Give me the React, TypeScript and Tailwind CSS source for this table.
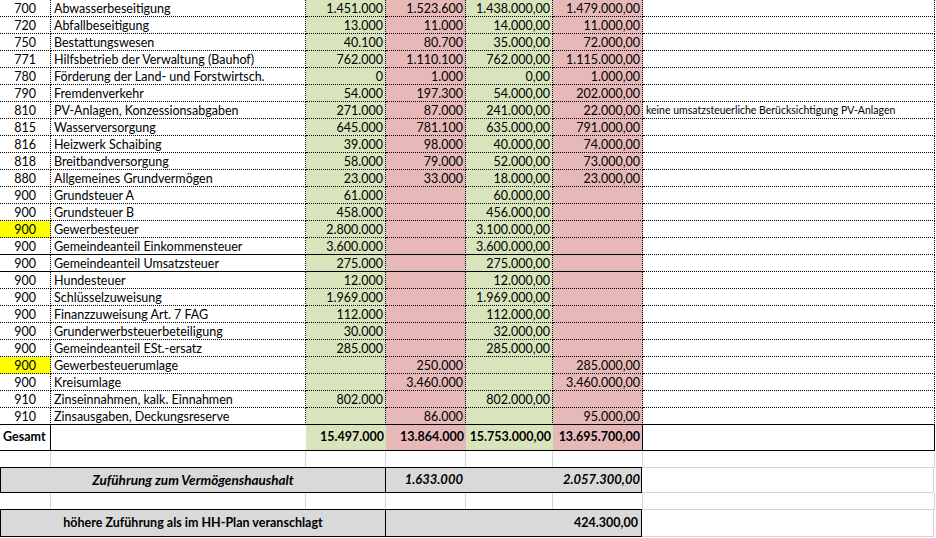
import React from "react";

type Row = {
  code: string;
  name: string;
  c?: string;
  d?: string;
  e?: string;
  f?: string;
  note?: string;
  yellow?: boolean;
  bottom?: "dotted" | "solidAF" | "solidAll";
};

const rows: Row[] = [
  { code: "700", name: "Abwasserbeseitigung", c: "1.451.000", d: "1.523.600", e: "1.438.000,00", f: "1.479.000,00" },
  { code: "720", name: "Abfallbeseitigung", c: "13.000", d: "11.000", e: "14.000,00", f: "11.000,00" },
  { code: "750", name: "Bestattungswesen", c: "40.100", d: "80.700", e: "35.000,00", f: "72.000,00" },
  { code: "771", name: "Hilfsbetrieb der Verwaltung (Bauhof)", c: "762.000", d: "1.110.100", e: "762.000,00", f: "1.115.000,00" },
  { code: "780", name: "Förderung der Land- und Forstwirtsch.", c: "0", d: "1.000", e: "0,00", f: "1.000,00" },
  { code: "790", name: "Fremdenverkehr", c: "54.000", d: "197.300", e: "54.000,00", f: "202.000,00" },
  { code: "810", name: "PV-Anlagen, Konzessionsabgaben", c: "271.000", d: "87.000", e: "241.000,00", f: "22.000,00", note: "keine umsatzsteuerliche Berücksichtigung PV-Anlagen" },
  { code: "815", name: "Wasserversorgung", c: "645.000", d: "781.100", e: "635.000,00", f: "791.000,00" },
  { code: "816", name: "Heizwerk Schaibing", c: "39.000", d: "98.000", e: "40.000,00", f: "74.000,00" },
  { code: "818", name: "Breitbandversorgung", c: "58.000", d: "79.000", e: "52.000,00", f: "73.000,00" },
  { code: "880", name: "Allgemeines Grundvermögen", c: "23.000", d: "33.000", e: "18.000,00", f: "23.000,00" },
  { code: "900", name: "Grundsteuer A", c: "61.000", e: "60.000,00" },
  { code: "900", name: "Grundsteuer B", c: "458.000", e: "456.000,00" },
  { code: "900", name: "Gewerbesteuer", c: "2.800.000", e: "3.100.000,00", yellow: true },
  { code: "900", name: "Gemeindeanteil Einkommensteuer", c: "3.600.000", e: "3.600.000,00", bottom: "solidAF" },
  { code: "900", name: "Gemeindeanteil Umsatzsteuer", c: "275.000", e: "275.000,00", bottom: "solidAF" },
  { code: "900", name: "Hundesteuer", c: "12.000", e: "12.000,00" },
  { code: "900", name: "Schlüsselzuweisung", c: "1.969.000", e: "1.969.000,00" },
  { code: "900", name: "Finanzzuweisung Art. 7 FAG", c: "112.000", e: "112.000,00" },
  { code: "900", name: "Grunderwerbsteuerbeteiligung", c: "30.000", e: "32.000,00" },
  { code: "900", name: "Gemeindeanteil ESt.-ersatz", c: "285.000", e: "285.000,00" },
  { code: "900", name: "Gewerbesteuerumlage", d: "250.000", f: "285.000,00", yellow: true },
  { code: "900", name: "Kreisumlage", d: "3.460.000", f: "3.460.000,00" },
  { code: "910", name: "Zinseinnahmen, kalk. Einnahmen", c: "802.000", e: "802.000,00" },
  { code: "910", name: "Zinsausgaben, Deckungsreserve", d: "86.000", f: "95.000,00", bottom: "solidAll" },
];

const base = "shrink-0 h-full border-r border-b border-dotted border-black flex items-end pb-[1px] leading-none whitespace-nowrap overflow-hidden";

function DataRow({ r }: { r: Row }) {
  const solidAF = r.bottom === "solidAF" || r.bottom === "solidAll";
  const bAF = solidAF ? "[border-bottom-style:solid]" : "";
  const bG = r.bottom === "solidAll" ? "[border-bottom-style:solid]" : "";
  return (
    <div className="flex h-[17px]">
      <div className={`${base} ${bAF} w-[51px] justify-end pr-[14px] ${r.yellow ? "bg-[#ffff00]" : ""}`}>{r.code}</div>
      <div className={`${base} ${bAF} w-[255px] pl-[3px]`}>{r.name}</div>
      <div className={`${base} ${bAF} w-[80px] justify-end pr-[2px] bg-[#d8e4bc]`}>{r.c ?? ""}</div>
      <div className={`${base} ${bAF} w-[80px] justify-end pr-[2px] bg-[#e6b8b7]`}>{r.d ?? ""}</div>
      <div className={`${base} ${bAF} w-[87px] justify-end pr-[2px] bg-[#d8e4bc]`}>{r.e ?? ""}</div>
      <div className={`${base} ${bAF} w-[90px] justify-end pr-[2px] bg-[#e6b8b7]`}>{r.f ?? ""}</div>
      <div className={`${base} ${bG} w-[292px] pl-[3px] text-[10.5px] pb-[3px]`}>{r.note ?? ""}</div>
    </div>
  );
}

const grid = "shrink-0 h-full border-r border-b border-[#d4d4d4]";

function EmptyRow() {
  return (
    <div className="flex h-[17px]">
      <div className={`${grid} w-[51px]`} />
      <div className={`${grid} w-[255px]`} />
      <div className={`${grid} w-[80px]`} />
      <div className={`${grid} w-[80px]`} />
      <div className={`${grid} w-[87px]`} />
      <div className={`${grid} w-[90px]`} />
      <div className={`${grid} w-[292px]`} />
    </div>
  );
}

export default function App() {
  return (
    <div className="w-[936px] h-[538px] bg-white overflow-hidden font-['Lato',sans-serif] text-[12.5px] text-black">
      {rows.map((r, i) => (
        <DataRow key={i} r={r} />
      ))}
      {/* Gesamt */}
      <div className="flex h-[26px]">
        <div className="shrink-0 w-[52px] -ml-px h-full border-l border-r border-b border-black flex items-center pl-[3px] font-bold">
          Gesamt
        </div>
        <div className="shrink-0 w-[255px] h-full border-b border-black" />
        <div className="shrink-0 w-[80px] h-full border-b border-black bg-[#d8e4bc] flex items-center justify-end pr-[2px] font-bold">15.497.000</div>
        <div className="shrink-0 w-[80px] h-full border-b border-black bg-[#e6b8b7] flex items-center justify-end pr-[2px] font-bold">13.864.000</div>
        <div className="shrink-0 w-[87px] h-full border-b border-black bg-[#d8e4bc] flex items-center justify-end pr-[2px] font-bold">15.753.000,00</div>
        <div className="shrink-0 w-[90px] h-full border-b border-r border-black bg-[#e6b8b7] flex items-center justify-end pr-[2px] font-bold">13.695.700,00</div>
        <div className="shrink-0 w-[292px] h-full border-b border-r border-black" />
      </div>
      <EmptyRow />
      {/* Zuführung */}
      <div className="flex h-[26px] -mt-px">
        <div className="shrink-0 w-[386px] h-full border border-black bg-[#d9d9d9] flex items-center justify-center font-bold italic text-[13.5px]">
          Zuführung zum Vermögenshaushalt
        </div>
        <div className="shrink-0 w-[257px] -ml-px h-full border border-black bg-[#d9d9d9] flex items-center font-bold italic text-[13px]">
          <div className="w-[79px] flex justify-end pr-[2px]">1.633.000</div>
          <div className="w-[87px]" />
          <div className="w-[89px] flex justify-end pr-[1px]">2.057.300,00</div>
        </div>
        <div className="shrink-0 w-[292px] h-full border-y border-r border-[#d4d4d4]" />
      </div>
      <EmptyRow />
      {/* höhere Zuführung */}
      <div className="flex h-[28px] -mt-px">
        <div className="shrink-0 w-[386px] h-full border border-black bg-[#d9d9d9] flex items-center justify-center font-bold">
          höhere Zuführung als im HH-Plan veranschlagt
        </div>
        <div className="shrink-0 w-[257px] -ml-px h-full border border-black bg-[#d9d9d9] flex items-center justify-end pr-[3px] font-bold">
          424.300,00
        </div>
        <div className="shrink-0 w-[292px] h-full border-y border-r border-[#d4d4d4]" />
      </div>
    </div>
  );
}
